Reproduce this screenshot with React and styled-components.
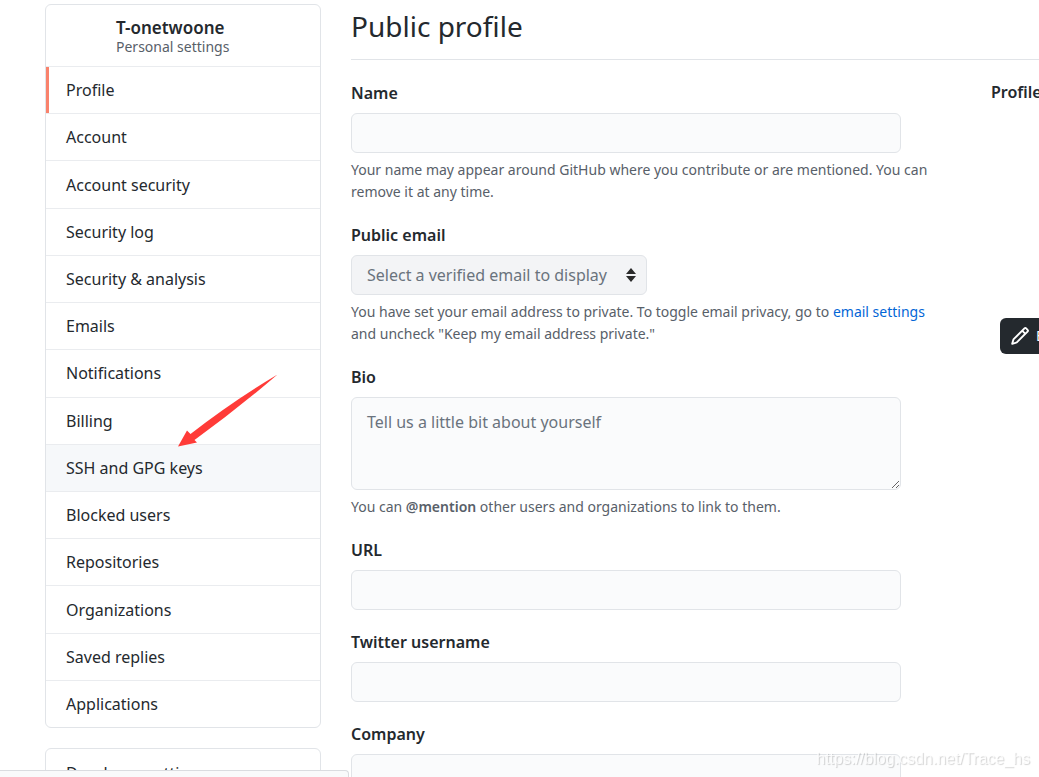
import React from 'react'
import styled, { createGlobalStyle, css } from 'styled-components'

const GlobalStyle = createGlobalStyle`
  * {
    box-sizing: border-box;
  }
  body {
    margin: 0;
    overflow-x: hidden;
    background: #fff;
    color: #24292e;
    font-family: 'Noto Sans', 'Open Sans', sans-serif;
    font-size: 16px;
    line-height: 26px;
  }
`

// Layout

const Page = styled.div`
  display: grid;
  grid-template-columns: 276px minmax(0, 1fr);
  column-gap: 30px;
  padding: 4px 0 0 45px;
`

const Sidebar = styled.aside`
  display: flex;
  flex-direction: column;
  gap: 20px;
`

const Main = styled.main`
  min-width: 0;
`

// Sidebar menu

const Menu = styled.nav`
  border: 1px solid #e1e4e8;
  border-radius: 6px;
`

const MenuHeader = styled.div`
  padding: 12px 20px 10px 70px;
`

const UserName = styled.strong`
  display: block;
  font-size: 17px;
  font-weight: 600;
  line-height: 21px;
`

const UserNote = styled.span`
  display: block;
  color: #586069;
  font-size: 14px;
  line-height: 18px;
`

const MenuList = styled.ul`
  display: flex;
  flex-direction: column;
  min-height: ${(p) => (p.$single ? '47px' : '661px')};
  margin: 0;
  padding: 0;
  list-style: none;
`

const MenuItem = styled.li`
  position: relative;
  display: flex;
  flex: 1;
  border-top: ${(p) => (p.$first ? '0' : '1px solid #eaecef')};
`

const MenuLink = styled.a`
  flex: 1;
  display: flex;
  align-items: center;
  padding: 0 20px;
  color: #24292e;
  text-decoration: none;
  ${(p) => p.$current && css`
    padding-left: 17px;
    border-left: 3px solid #f9826c;
  `};
  ${(p) => p.$hovered && css`
    background: #f6f8fa;
  `};
`

const Arrow = styled.svg`
  position: absolute;
  top: -72px;
  left: 132px;
  fill: #ff3b38;
  pointer-events: none;
`

// Profile form

const Heading = styled.h1`
  margin: 0 0 20px;
  padding-bottom: 11px;
  border-bottom: 1px solid #e1e4e8;
  font-size: 28px;
  font-weight: 400;
  line-height: 44px;
`

const Columns = styled.div`
  display: flex;
`

const Form = styled.form`
  flex: 1;
  min-width: 0;
  display: flex;
  flex-direction: column;
  gap: 19px;
  padding-right: 56px;
`

const Field = styled.div`
  display: flex;
  flex-direction: column;
  align-items: flex-start;
`

const Label = styled.label`
  margin-bottom: 7px;
  font-weight: 600;
`

const control = css`
  display: block;
  width: 100%;
  max-width: 550px;
  margin: 0;
  border: 1px solid #e1e4e8;
  border-radius: 6px;
  background: #fafbfc;
  color: #24292e;
  font: inherit;
  outline: none;
`

const Input = styled.input`
  ${control};
  height: 40px;
  padding: 6px 15px;
`

const TextArea = styled.textarea`
  ${control};
  height: 93px;
  padding: 11px 15px;
  resize: vertical;
  &::placeholder {
    color: #6a737d;
    opacity: 1;
  }
`

const SelectWrap = styled.div`
  position: relative;
`

const Select = styled.select`
  ${control};
  width: 296px;
  height: 40px;
  padding: 0 24px 0 15px;
  background: #f3f4f6;
  color: #6a737d;
  appearance: none;
  opacity: 1;
`

const Caret = styled.svg`
  position: absolute;
  top: 13px;
  right: 11px;
  fill: #2b2b2b;
  pointer-events: none;
`

const Hint = styled.p`
  margin: 6px 0 0;
  color: #586069;
  font-size: 14px;
  line-height: 22px;
`

const Mention = styled.strong`
  font-weight: 600;
`

const Link = styled.a`
  color: #0366d6;
  text-decoration: none;
`

// Profile picture

const Picture = styled.section`
  flex: 0 0 48px;
  overflow: hidden;
  white-space: nowrap;
`

const PictureTitle = styled.h2`
  margin: 0;
  font-size: 16px;
  font-weight: 600;
  line-height: 24px;
`

const EditButton = styled.button`
  display: flex;
  align-items: center;
  gap: 6px;
  height: 36px;
  margin: 214px 0 0 9px;
  padding: 0 10px;
  border: 0;
  border-radius: 6px;
  background: #24292e;
  color: #fff;
  font: inherit;
  font-size: 14px;
  svg {
    flex: none;
    fill: #fff;
  }
`

// Overlays

const StatusBar = styled.div`
  position: fixed;
  bottom: 0;
  left: 0;
  width: 349px;
  height: 7px;
  border: 1px solid #dadce0;
  border-width: 1px 1px 0 0;
  border-radius: 0 4px 0 0;
  background: #f9fafb;
`

const Watermark = styled.div`
  position: fixed;
  right: 9px;
  bottom: 8px;
  color: rgba(255, 255, 255, 0.8);
  font-family: 'Liberation Sans', sans-serif;
  font-size: 16px;
  line-height: 20px;
  text-shadow: 1px 1px 1px rgba(0, 0, 0, 0.18);
  pointer-events: none;
`

const items = [
  'Profile',
  'Account',
  'Account security',
  'Security log',
  'Security & analysis',
  'Emails',
  'Notifications',
  'Billing',
  'SSH and GPG keys',
  'Blocked users',
  'Repositories',
  'Organizations',
  'Saved replies',
  'Applications',
]

const Pointer = () => (
  <Arrow width="100" height="74" viewBox="0 0 100 74" aria-hidden="true">
    <path d="M0 73.5 L9 57.5 L12.5 61 Q55 28 99.5 1.5 Q60 35.5 16.5 67 L19 69.5 Z" />
  </Arrow>
)

const Pencil = () => (
  <svg width="20" height="20" viewBox="0 0 16 16" aria-hidden="true">
    <path
      fillRule="evenodd"
      d="M11.013 1.427a1.75 1.75 0 012.474 0l1.086 1.086a1.75 1.75 0 010 2.474l-8.61 8.61c-.21.21-.47.364-.756.445l-3.251.93a.75.75 0 01-.927-.928l.929-3.25a1.75 1.75 0 01.445-.758l8.61-8.61zm1.414 1.06a.25.25 0 00-.354 0L10.811 3.75l1.439 1.44 1.263-1.263a.25.25 0 000-.354l-1.086-1.086zM11.189 6.25L9.75 4.81l-6.286 6.287a.25.25 0 00-.064.108l-.558 1.953 1.953-.558a.249.249 0 00.108-.064l6.286-6.286z"
    />
  </svg>
)

const App = () => (
  <>
    <GlobalStyle />
    <Page>
      <Sidebar>
        <Menu aria-label="Personal settings">
          <MenuHeader>
            <UserName>T-onetwoone</UserName>
            <UserNote>Personal settings</UserNote>
          </MenuHeader>
          <MenuList>
            {items.map((item) => (
              <MenuItem key={item}>
                <MenuLink
                  href="#"
                  $current={item === 'Profile'}
                  $hovered={item === 'SSH and GPG keys'}
                >
                  {item}
                </MenuLink>
                {item === 'SSH and GPG keys' && <Pointer />}
              </MenuItem>
            ))}
          </MenuList>
        </Menu>
        <Menu aria-label="Developer settings">
          <MenuList $single>
            <MenuItem $first>
              <MenuLink href="#">Developer settings</MenuLink>
            </MenuItem>
          </MenuList>
        </Menu>
      </Sidebar>
      <Main>
        <Heading>Public profile</Heading>
        <Columns>
          <Form>
            <Field>
              <Label htmlFor="name">Name</Label>
              <Input id="name" type="text" />
              <Hint>
                Your name may appear around GitHub where you contribute or are mentioned. You can remove it at any
                time.
              </Hint>
            </Field>
            <Field>
              <Label htmlFor="email">Public email</Label>
              <SelectWrap>
                <Select id="email" disabled>
                  <option>Select a verified email to display</option>
                </Select>
                <Caret width="10" height="14" viewBox="0 0 10 14" aria-hidden="true">
                  <path d="M5 0 L10 6 H0 Z M0 8 H10 L5 14 Z" />
                </Caret>
              </SelectWrap>
              <Hint>
                You have set your email address to private. To toggle email privacy, go to{' '}
                <Link href="#">email settings</Link> and uncheck "Keep my email address private."
              </Hint>
            </Field>
            <Field>
              <Label htmlFor="bio">Bio</Label>
              <TextArea id="bio" placeholder="Tell us a little bit about yourself" />
              <Hint>
                You can <Mention>@mention</Mention> other users and organizations to link to them.
              </Hint>
            </Field>
            <Field>
              <Label htmlFor="url">URL</Label>
              <Input id="url" type="url" />
            </Field>
            <Field>
              <Label htmlFor="twitter">Twitter username</Label>
              <Input id="twitter" type="text" />
            </Field>
            <Field>
              <Label htmlFor="company">Company</Label>
              <Input id="company" type="text" />
            </Field>
          </Form>
          <Picture>
            <PictureTitle>Profile picture</PictureTitle>
            <EditButton type="button">
              <Pencil />
              Edit
            </EditButton>
          </Picture>
        </Columns>
      </Main>
    </Page>
    <StatusBar />
    <Watermark>https://blog.csdn.net/Trace_hs</Watermark>
  </>
)

export default App
